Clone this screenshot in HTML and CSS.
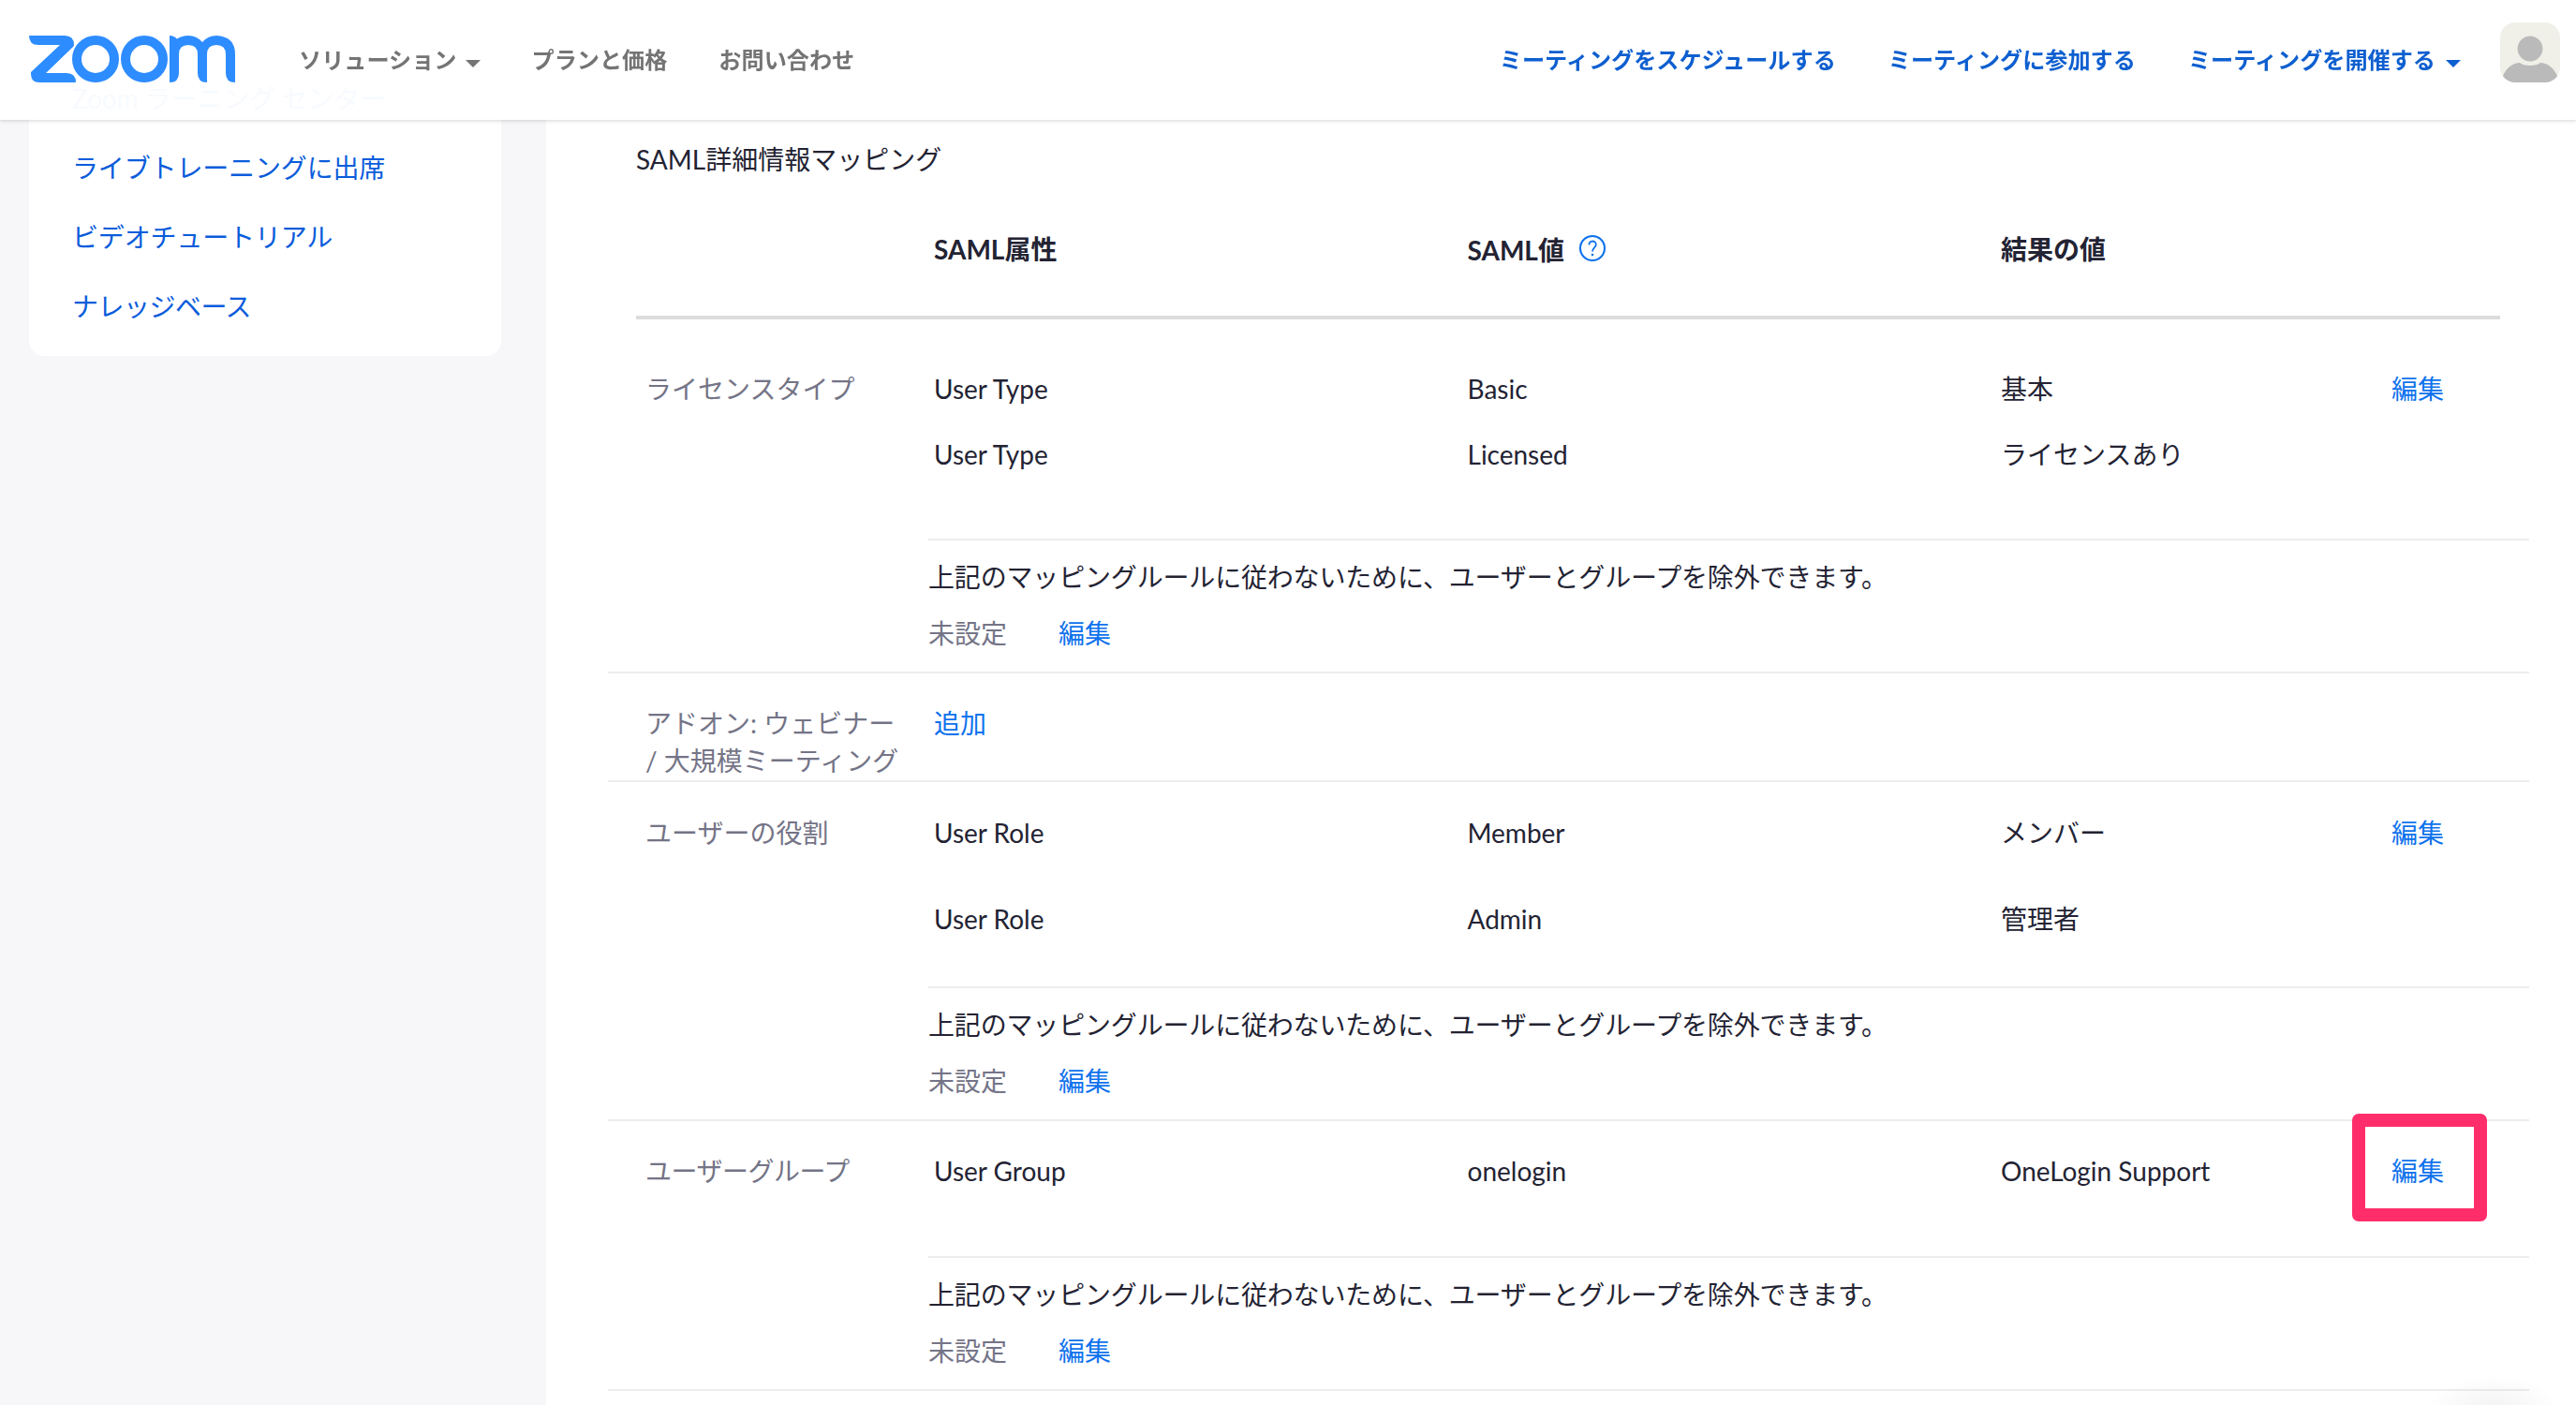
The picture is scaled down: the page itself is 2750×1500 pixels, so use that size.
FILE: index.html
```html
<!DOCTYPE html>
<html lang="ja">
<head>
<meta charset="utf-8">
<title>Zoom</title>
<link rel="stylesheet" href="styles.css">
</head>
<body>
<header class="header">
  <svg class="logo" viewBox="0 0 220 50" role="img" aria-label="Zoom">
    <g fill="#2d8cff">
      <path d="M0 0H38Q48 0 48 10Q48 11 47 12L18 40H40Q50 40 50 50H11Q2 50 2 41V39L33 10H10Q0 10 0 0Z"/>
      <path d="M150 0Q155 0 158 3.5Q163 0 170 0Q179 0 185 7Q191 0 200 0Q220 1 220 20V50Q210 50 210 40V20Q210 10 200 10Q190 10 190 20V50Q180 50 180 40V20Q180 10 170 10Q160 10 160 20V40Q160 50 150 50Z"/>
    </g>
    <g fill="none" stroke="#2d8cff" stroke-width="10"><circle cx="71" cy="25" r="20"/><circle cx="123" cy="25" r="20"/></g>
  </svg>
  <nav class="nav nav-left">
    <a>ソリューション<i class="caret"></i></a>
    <a>プランと価格</a>
    <a>お問い合わせ</a>
  </nav>
  <nav class="nav nav-right">
    <a>ミーティングをスケジュールする</a>
    <a>ミーティングに参加する</a>
    <a>ミーティングを開催する<i class="caret"></i></a>
  </nav>
  <svg class="avatar" viewBox="0 0 64 64">
    <rect width="64" height="64" fill="#f0f0e9"/>
    <circle cx="32" cy="28" r="13.4" fill="#bababa"/>
    <path d="M3 57C7 48 14 43 21 43C25 47 39 47 43 43C50 43 57 48 61 57V64H3Z" fill="#bababa"/>
  </svg>
</header>
<div class="page">
  <aside class="sidebar">
    <a>Zoom ラーニング センター</a>
    <a>ライブトレーニングに出席</a>
    <a>ビデオチュートリアル</a>
    <a class="tight">ナレッジベース</a>
  </aside>
  <main class="main">
    <h2 class="title">SAML詳細情報マッピング</h2>
    <div class="row head">
      <span></span><span>SAML属性</span>
      <span class="with-help">SAML値
        <svg class="help" viewBox="0 0 30 30" fill="none" stroke="#0e72ed" stroke-width="2.1"><circle cx="15" cy="15" r="13"/><path d="M11.4 11.4C11.4 6.3 18.8 6.3 18.8 11C18.8 14.2 15 14.6 15 18.6" stroke-width="1.8"/><circle cx="15" cy="22" r="1.3" fill="#0e72ed" stroke="none"/></svg>
      </span>
      <span>結果の値</span><span></span>
    </div>

    <section class="group license">
      <div class="row"><span class="label">ライセンスタイプ</span><span>User Type</span><span>Basic</span><span>基本</span><a>編集</a></div>
      <div class="row"><span></span><span>User Type</span><span>Licensed</span><span>ライセンスあり</span></div>
      <div class="exclude">
        <p class="note">上記のマッピングルールに従わないために、ユーザーとグループを除外できます。</p>
        <p class="status"><span>未設定</span><a>編集</a></p>
      </div>
    </section>

    <section class="group addon">
      <div class="row"><span class="label">アドオン: ウェビナー<br>/ 大規模ミーティング</span><a>追加</a></div>
    </section>

    <section class="group role">
      <div class="row"><span class="label">ユーザーの役割</span><span>User Role</span><span>Member</span><span>メンバー</span><a>編集</a></div>
      <div class="row"><span></span><span>User Role</span><span>Admin</span><span>管理者</span></div>
      <div class="exclude">
        <p class="note">上記のマッピングルールに従わないために、ユーザーとグループを除外できます。</p>
        <p class="status"><span>未設定</span><a>編集</a></p>
      </div>
    </section>

    <section class="group usergroup">
      <div class="row"><span class="label tight">ユーザーグループ</span><span>User Group</span><span>onelogin</span><span>OneLogin Support</span><a class="marked">編集</a></div>
      <div class="exclude">
        <p class="note">上記のマッピングルールに従わないために、ユーザーとグループを除外できます。</p>
        <p class="status"><span>未設定</span><a>編集</a></p>
      </div>
    </section>
  </main>
</div>
<div class="float-shadow"></div>
</body>
</html>
```
FILE: styles.css
```css
*, *::before { box-sizing: border-box; }

body {
  margin: 0;
  height: 1500px;
  overflow: hidden;
  background: #f7f7fa;
  color: #232333;
  font: 28px/40px Lato, "Noto Sans CJK JP", sans-serif;
}

a { color: #0e72ed; }
p, h2 { margin: 0; font-size: inherit; font-weight: inherit; }

.header {
  position: fixed;
  z-index: 5;
  top: 0;
  left: 0;
  width: 100%;
  height: 128px;
  padding: 0 17px 0 31px;
  display: flex;
  background: rgba(255, 255, 255, .97);
  box-shadow: 0 1px 4px rgba(0, 0, 0, .17);
}
.logo { width: 220px; height: 50px; margin-top: 38px; }
.nav { display: flex; font-size: 24.15px; font-weight: 700; line-height: 36px; margin-top: 46px; white-space: nowrap; }
.nav-left { margin-left: 68px; gap: 55px; }
.nav-left a { color: #747474; }
.nav-right { margin-left: auto; margin-right: 42px; gap: 56px; }
.nav-right a { color: #0e5fd0; }
.caret {
  display: inline-block;
  margin-left: 9px;
  border: 8px solid transparent;
  border-top-color: currentColor;
  border-bottom: 0;
  vertical-align: 1px;
}
.nav-right .caret { margin-left: 11px; }
.avatar { width: 64px; height: 64px; margin-top: 24px; border-radius: 16px; }

.page { display: flex; height: 1500px; }

.sidebar {
  flex: none;
  width: 504px;
  height: 380px;
  margin-left: 31px;
  padding: 85px 46px 0;
  display: flex;
  flex-direction: column;
  gap: 34px;
  background: #fff;
  border-radius: 0 0 16px 16px;
}
.sidebar a { color: #0a5cdb; letter-spacing: -.15px; }
.sidebar .tight, .tight { letter-spacing: -.5px; }

.main { flex: 1; min-width: 0; margin-left: 48px; background: #fff; }
.title { margin: 114px 81px 0 96px; padding-top: 35px; border-top: 1px solid #ededed; height: 97px; }

.row {
  display: grid;
  grid-template-columns: 318px 569.5px 569.5px 417px 1fr;
  margin-left: 96px;
}
.head { height: 130px; padding-top: 35px; margin-right: 81px; border-bottom: 4px solid #dcdcdc; font-weight: 700; }
.with-help { display: flex; gap: 15px; padding-top: 1px; }
.help { width: 30px; height: 30px; margin-top: 3px; }

.group { margin: 0 50px 0 66px; border-bottom: 2px solid #ededed; }
.group .row { margin-left: 0; grid-template-columns: 348px 569.5px 569.5px 417px 1fr; }
.label { padding-left: 40px; color: #747487; white-space: nowrap; }

.license { height: 378px; padding-top: 54px; }
.license .row { height: 70px; }
.license .exclude { margin-top: 40px; }
.addon { height: 116px; padding-top: 33px; }
.role { height: 362px; padding-top: 34px; }
.role .row { height: 92px; }
.usergroup { height: 288px; padding-top: 33px; }
.usergroup .row { height: 111px; }

.exclude { margin-left: 342px; padding-top: 19px; border-top: 2px solid #ededed; }
.note { letter-spacing: -.17px; }
.status { display: flex; gap: 55px; margin-top: 20px; color: #747487; }

.marked { position: relative; justify-self: start; }
.marked::before {
  content: "";
  position: absolute;
  left: -42px;
  top: -41px;
  width: 144px;
  height: 115px;
  border: 14px solid #ff2e6b;
  border-radius: 7px;
}

.float-shadow {
  position: absolute;
  left: 2590px;
  top: 1468px;
  width: 145px;
  height: 80px;
  border-radius: 50%;
  background: radial-gradient(closest-side, rgba(0, 0, 0, .05), transparent);
}
```
